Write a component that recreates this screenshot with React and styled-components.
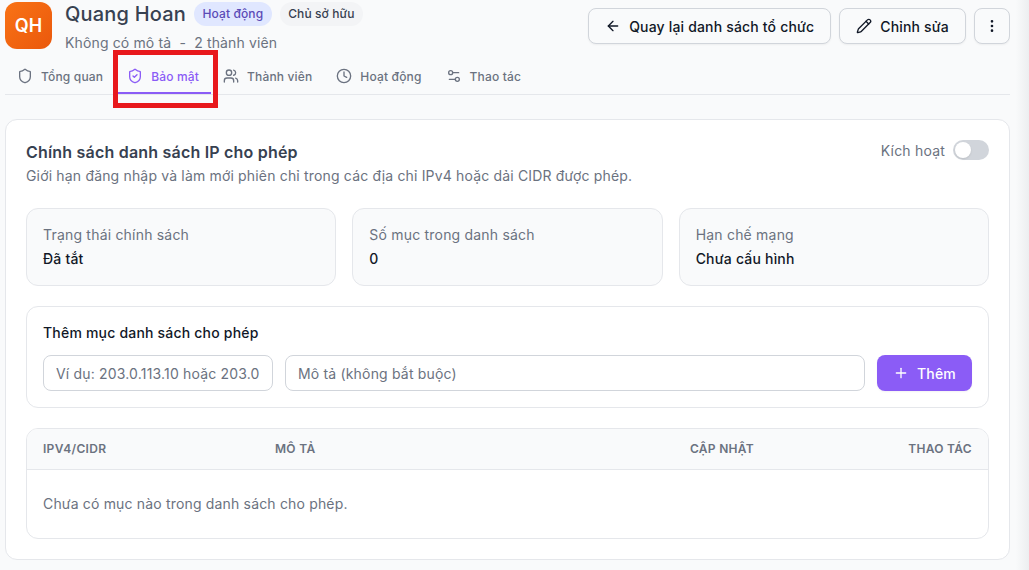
import React from 'react';
import styled, {createGlobalStyle} from 'styled-components';
import {ArrowLeft, Clock, EllipsisVertical, Pencil, Plus, Settings2, Shield, ShieldCheck, Users} from 'lucide-react';

const GlobalStyle = createGlobalStyle`
  html, body {
    margin: 0;
    height: 100%;
    overflow: hidden;
    background: #f9fafb;
  }
  * {
    box-sizing: border-box;
  }
  body {
    font-family: Inter, "Noto Sans", sans-serif;
    color: #111827;
    letter-spacing: 0.0125em;
  }
`
const Page = styled.div`
  width: 1029px;
  height: 570px;
  padding: 2px 19px 0 5px;
  position: relative;
  overflow: hidden;
`
const ScrollShade = styled.div`
  position: absolute;
  top: 0;
  right: 0;
  width: 19px;
  height: 100%;
  background: linear-gradient(to right, #f9fafb, #f9fafb 30%, #eceef0);
`
const Header = styled.header`
  display: flex;
  justify-content: space-between;
  height: 47px;
`
const Identity = styled.div`
  display: flex;
  gap: 13px;
`
const Avatar = styled.div`
  width: 47px;
  height: 47px;
  border-radius: 12px;
  background: linear-gradient(135deg, #f97316, #ea580c);
  color: #fff;
  font-size: 18px;
  font-weight: 600;
  display: flex;
  align-items: center;
  justify-content: center;
`
const TitleRow = styled.div`
  display: flex;
  align-items: center;
  gap: 8px;
  height: 24px;
`
const Name = styled.h1`
  margin: 0;
  font-size: 20px;
  line-height: 24px;
  font-weight: 500;
  color: #374151;
`
const Pill = styled.span`
  height: 24px;
  padding: 0 8.5px;
  border-radius: 12px;
  font-size: 12px;
  font-weight: 500;
  line-height: 24px;
  letter-spacing: 0.1px;
  background: ${p => p.$active ? '#e0e7ff' : '#f3f4f6'};
  color: ${p => p.$active ? '#5b4bb7' : '#374151'};
`
const Meta = styled.div`
  margin-top: 7px;
  font-size: 14px;
  line-height: 20px;
  letter-spacing: 0.01em;
  color: #6b7280;
  white-space: pre;
`
const Actions = styled.div`
  display: flex;
  gap: 8px;
  padding-top: 6px;
`
const OutlineButton = styled.button`
  height: 36px;
  padding: ${p => p.$square ? '0' : '0 16px'};
  width: ${p => p.$square ? '36px' : 'auto'};
  display: flex;
  align-items: center;
  justify-content: center;
  gap: 8px;
  background: #f9fafb;
  border: 1px solid #d1d5db;
  border-radius: 8px;
  box-shadow: 0 1px 2px rgba(0, 0, 0, 0.05);
  font: 500 14px Inter, sans-serif;
  letter-spacing: 0.0125em;
  color: #111827;
`
const Tabs = styled.nav`
  display: flex;
  height: 46px;
  padding-top: 3px;
  border-bottom: 1px solid #e5e7eb;
`
const Tab = styled.div`
  display: flex;
  align-items: center;
  gap: 8px;
  height: 42px;
  padding: 8px 12px 0;
  font-size: 12px;
  font-weight: 500;
  letter-spacing: 0.165px;
  color: ${p => p.$active ? '#8b5cf6' : '#6b7280'};
  border-bottom: 2px solid ${p => p.$active ? '#8b5cf6' : 'transparent'};
  svg {
    flex: none;
  }
`
const Highlight = styled.div`
  position: absolute;
  left: 113px;
  top: 50px;
  width: 105px;
  height: 58px;
  border: 5px solid #e8181c;
`
const Card = styled.section`
  margin-top: 24px;
  height: 441px;
  padding: 20px;
  background: #fff;
  border: 1px solid #e5e7eb;
  border-radius: 12px;
`
const CardTop = styled.div`
  display: flex;
  justify-content: space-between;
`
const CardTitle = styled.h2`
  margin: 0;
  font-size: 16px;
  line-height: 24px;
  font-weight: 600;
  color: #374151;
`
const CardText = styled.p`
  margin: 2px 0 0;
  font-size: 14px;
  line-height: 20px;
  letter-spacing: 0.17px;
  color: #6b7280;
`
const ToggleRow = styled.div`
  display: flex;
  align-items: center;
  gap: 8px;
  height: 20px;
  font-size: 14px;
  color: #6b7280;
`
const Toggle = styled.div`
  width: 36px;
  height: 20px;
  padding: 2px;
  border-radius: 10px;
  background: #d1d5db;
  &::before {
    content: "";
    display: block;
    width: 16px;
    height: 16px;
    border-radius: 50%;
    background: #fff;
    box-shadow: 0 1px 2px rgba(0, 0, 0, 0.1);
  }
`
const Stats = styled.div`
  display: grid;
  grid-template-columns: repeat(3, 1fr);
  gap: 16px;
  margin-top: 22px;
`
const Stat = styled.div`
  height: 78px;
  padding: 16px;
  background: #f9fafb;
  border: 1px solid #e5e7eb;
  border-radius: 12px;
`
const StatLabel = styled.div`
  font-size: 14px;
  line-height: 20px;
  color: #6b7280;
`
const StatValue = styled.div`
  margin-top: 4px;
  font-size: 14px;
  line-height: 20px;
  font-weight: 500;
  color: #111827;
`
const AddBox = styled.div`
  margin-top: 20px;
  height: 102px;
  padding: 16px;
  border: 1px solid #e5e7eb;
  border-radius: 12px;
`
const AddTitle = styled.div`
  font-size: 14px;
  line-height: 20px;
  font-weight: 500;
  color: #111827;
`
const AddRow = styled.div`
  display: flex;
  gap: 12px;
  margin-top: 12px;
`
const Input = styled.input`
  flex: ${p => p.$grow ? '1' : 'none'};
  width: ${p => p.$grow ? 'auto' : '230px'};
  min-width: 0;
  height: 36px;
  padding: 0 12px;
  background: #fff;
  border: 1px solid #d1d5db;
  border-radius: 8px;
  font: 400 14px Inter, sans-serif;
  letter-spacing: 0.0125em;
  &::placeholder {
    color: #6b7280;
    opacity: 1;
  }
`
const AddButton = styled.button`
  flex: none;
  width: 95px;
  height: 36px;
  display: flex;
  align-items: center;
  justify-content: center;
  gap: 8px;
  background: #8b5cf6;
  border: 0;
  border-radius: 8px;
  box-shadow: 0 1px 2px rgba(0, 0, 0, 0.05);
  color: #fff;
  font: 500 14px Inter, sans-serif;
  letter-spacing: 0.0125em;
`
const TableBox = styled.div`
  margin-top: 20px;
  height: 111px;
  border: 1px solid #e5e7eb;
  border-radius: 12px;
  overflow: hidden;
`
const TableHead = styled.div`
  display: grid;
  grid-template-columns: 232px 1fr 120px 218px;
  align-items: center;
  height: 41px;
  padding: 0 16px;
  background: #f9fafb;
  border-bottom: 1px solid #e5e7eb;
`
const HeadCell = styled.div`
  font-size: 12px;
  line-height: 16px;
  font-weight: 600;
  letter-spacing: 0.025em;
  color: #6b7280;
  text-align: ${p => p.$right ? 'right' : 'left'};
`
const EmptyRow = styled.div`
  padding: 24px 16px;
  font-size: 14px;
  line-height: 20px;
  letter-spacing: 0.17px;
  color: #6b7280;
`

const tabs = [
    {label: 'Tổng quan', icon: Shield},
    {label: 'Bảo mật', icon: ShieldCheck, active: true},
    {label: 'Thành viên', icon: Users},
    {label: 'Hoạt động', icon: Clock},
    {label: 'Thao tác', icon: Settings2},
]

const stats = [
    {label: 'Trạng thái chính sách', value: 'Đã tắt'},
    {label: 'Số mục trong danh sách', value: '0'},
    {label: 'Hạn chế mạng', value: 'Chưa cấu hình'},
]

function App() {
    return (
        <Page>
            <GlobalStyle/>
            <ScrollShade/>
            <Header>
                <Identity>
                    <Avatar>QH</Avatar>
                    <div>
                        <TitleRow>
                            <Name>Quang Hoan</Name>
                            <Pill $active>Hoạt động</Pill>
                            <Pill>Chủ sở hữu</Pill>
                        </TitleRow>
                        <Meta>Không có mô tả  -  2 thành viên</Meta>
                    </div>
                </Identity>
                <Actions>
                    <OutlineButton><ArrowLeft size={16}/>Quay lại danh sách tổ chức</OutlineButton>
                    <OutlineButton><Pencil size={16}/>Chỉnh sửa</OutlineButton>
                    <OutlineButton $square><EllipsisVertical size={16}/></OutlineButton>
                </Actions>
            </Header>
            <Tabs>
                {tabs.map(({label, icon: Icon, active}) => (
                    <Tab key={label} $active={active}><Icon size={16}/>{label}</Tab>
                ))}
            </Tabs>
            <Card>
                <CardTop>
                    <div>
                        <CardTitle>Chính sách danh sách IP cho phép</CardTitle>
                        <CardText>Giới hạn đăng nhập và làm mới phiên chỉ trong các địa chỉ IPv4 hoặc dải CIDR được phép.</CardText>
                    </div>
                    <ToggleRow>Kích hoạt<Toggle/></ToggleRow>
                </CardTop>
                <Stats>
                    {stats.map(s => (
                        <Stat key={s.label}>
                            <StatLabel>{s.label}</StatLabel>
                            <StatValue>{s.value}</StatValue>
                        </Stat>
                    ))}
                </Stats>
                <AddBox>
                    <AddTitle>Thêm mục danh sách cho phép</AddTitle>
                    <AddRow>
                        <Input placeholder="Ví dụ: 203.0.113.10 hoặc 203.0.113.0/24"/>
                        <Input $grow placeholder="Mô tả (không bắt buộc)"/>
                        <AddButton><Plus size={16}/>Thêm</AddButton>
                    </AddRow>
                </AddBox>
                <TableBox>
                    <TableHead>
                        <HeadCell>IPV4/CIDR</HeadCell>
                        <HeadCell>MÔ TẢ</HeadCell>
                        <HeadCell $right>CẬP NHẬT</HeadCell>
                        <HeadCell $right>THAO TÁC</HeadCell>
                    </TableHead>
                    <EmptyRow>Chưa có mục nào trong danh sách cho phép.</EmptyRow>
                </TableBox>
            </Card>
            <Highlight/>
        </Page>
    );
}

export default App;
